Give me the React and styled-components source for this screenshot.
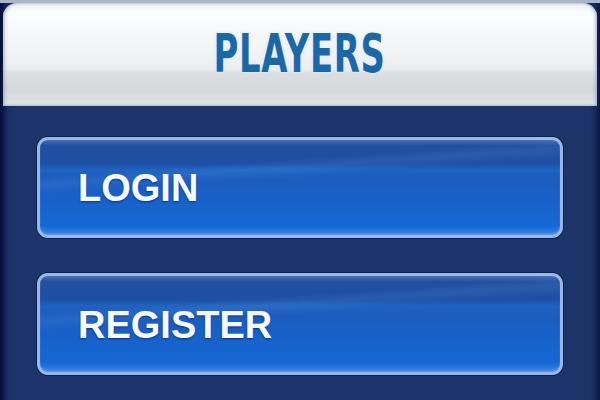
import styled, { createGlobalStyle } from "styled-components";

const GlobalStyle = createGlobalStyle`
  html, body {
    margin: 0;
    padding: 0;
    background: #1b3468;
  }
`;

const Frame = styled.div`
  width: 600px;
  height: 400px;
  overflow: hidden;
  display: flex;
  flex-direction: column;
  background: linear-gradient(
    to right,
    #050d36 0px,
    #0d1d52 4px,
    #182f63 8px,
    #1c3469 14px,
    #1c3469 590px,
    #16295a 595px,
    #0a163f 600px
  );
`;

const Top = styled.div`
  padding: 3px 3px 0;
  background: linear-gradient(to bottom, #a9b6c4 0px, #a9b6c4 3px, transparent 3px);
`;

const Header = styled.div`
  height: 103px;
  border-radius: 14px 14px 0 0;
  display: flex;
  align-items: center;
  justify-content: center;
  background: linear-gradient(
    to bottom,
    #eef1f4 0%,
    #fbfcfd 10%,
    #f4f5f7 40%,
    #eceef0 64%,
    #dcdfe2 68%,
    #d5d8db 85%,
    #e1e3e5 100%
  );
  box-shadow: inset 2px 0 3px rgba(120, 150, 190, 0.5), inset -2px 0 3px rgba(120, 150, 190, 0.5);
`;

const Title = styled.h1`
  margin: 0 0 2px;
  font-family: "DejaVu Sans", "Liberation Sans", sans-serif;
  font-weight: bold;
  font-size: 53px;
  line-height: 1;
  letter-spacing: 1px;
  color: #1c68a6;
  transform: scaleX(0.64);
  text-shadow: 0 0 2px #ffffff, 0 0 4px rgba(200, 230, 255, 0.9);
`;

const Body = styled.div`
  flex: 1;
  display: flex;
  flex-direction: column;
  gap: 35px;
  padding: 31px 37px 0;
`;

const MenuButton = styled.button`
  height: ${(p) => p.$h}px;
  box-sizing: border-box;
  border-radius: 11px;
  border: 3px solid rgba(165, 192, 236, 0.9);
  display: flex;
  align-items: center;
  padding: 2px 0 0 38px;
  cursor: pointer;
  background:
    linear-gradient(176deg, transparent 28%, rgba(120, 180, 255, 0.12) 34%, transparent 42%),
    linear-gradient(
      to bottom,
      #4a70b6 0%,
      #224f9f 6%,
      #1d4fa4 25%,
      #1f62c0 31%,
      #1c5cbc 42%,
      #1860c8 60%,
      #1567d2 90%,
      #2a7ae0 97%,
      #3d80d8 100%
    );
  box-shadow: 0 0 0 1px rgba(8, 20, 60, 0.6), inset 0 -2px 2px rgba(150, 190, 250, 0.35);
  font-family: "Liberation Sans", Arial, sans-serif;
  font-weight: bold;
  font-size: 38px;
  color: #f4f8ff;
  text-shadow: 0 1px 2px rgba(0, 20, 70, 0.6);
`;

export default function App() {
  return (
    <Frame>
      <GlobalStyle />
      <Top>
        <Header>
          <Title>PLAYERS</Title>
        </Header>
      </Top>
      <Body>
        <MenuButton $h={101}>LOGIN</MenuButton>
        <MenuButton $h={102}>REGISTER</MenuButton>
      </Body>
    </Frame>
  );
}
